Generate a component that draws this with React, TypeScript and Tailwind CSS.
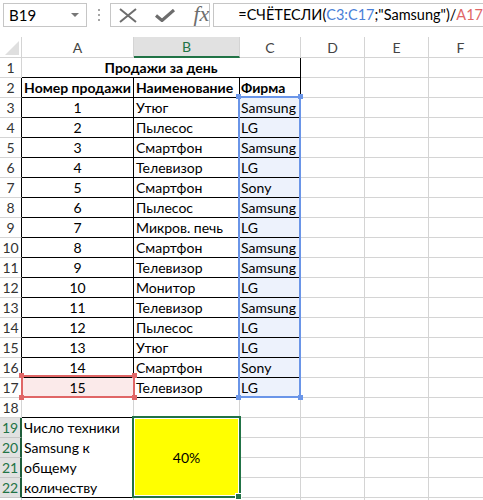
import React from "react";

const rows: [number, string, string][] = [
  [1, "Утюг", "Samsung"],
  [2, "Пылесос", "LG"],
  [3, "Смартфон", "Samsung"],
  [4, "Телевизор", "LG"],
  [5, "Смартфон", "Sony"],
  [6, "Пылесос", "Samsung"],
  [7, "Микров. печь", "LG"],
  [8, "Смартфон", "Samsung"],
  [9, "Телевизор", "Samsung"],
  [10, "Монитор", "LG"],
  [11, "Телевизор", "Samsung"],
  [12, "Пылесос", "LG"],
  [13, "Утюг", "LG"],
  [14, "Смартфон", "Sony"],
  [15, "Телевизор", "LG"],
];

const grid = "border-r border-b border-[#d4d4d4]";
const black = "border-r border-b border-black";

const RowHead = ({ n, dark, sel }: { n?: number; dark?: boolean; sel?: boolean }) => (
  <div
    className={`flex items-center justify-center border-b ${
      sel
        ? "bg-[#e1e1e1] text-[#217346] border-b-[#c6c6c6] border-r-2 border-r-[#1e5e3a]"
        : dark
        ? "text-[#333] border-b-[#d4d4d4] border-r border-r-black"
        : "text-[#333] border-b-[#d4d4d4] border-r border-r-[#d4d4d4]"
    }`}
  >
    {n}
  </div>
);

const Empty = ({ n = 3 }: { n?: number }) => (
  <>
    {Array.from({ length: n }).map((_, i) => (
      <div key={i} className={grid} />
    ))}
  </>
);

const Handle = ({ pos, color }: { pos: string; color: string }) => (
  <div className={`absolute w-[5px] h-[5px] ${pos} ${color}`} />
);

export default function App() {
  return (
    <div
      className="relative w-[483px] h-[500px] overflow-hidden bg-white text-[14px] text-black"
      style={{ fontFamily: "Lato, 'Open Sans', sans-serif" }}
    >
      {/* formula bar */}
      <div className="flex items-start h-[37px] pt-[3px] text-[15px]">
        <div className="ml-[3px] w-[101px] h-[24px] border border-[#c6c6c6] flex items-center justify-between pl-[5px] pr-[7px]">
          <span>B19</span>
          <svg width="8" height="4" viewBox="0 0 8 4">
            <path d="M0 0h8L4 4z" fill="#777" />
          </svg>
        </div>
        <div className="w-[29px] h-[24px] flex flex-col items-center justify-center gap-[3px]">
          <div className="w-[2px] h-[2px] bg-[#a6a6a6]" />
          <div className="w-[2px] h-[2px] bg-[#a6a6a6]" />
          <div className="w-[2px] h-[2px] bg-[#a6a6a6]" />
        </div>
        <div className="w-[110px] h-[24px] border border-[#c6c6c6] flex items-center pl-[8px] gap-[18px]">
          <svg width="18" height="15" viewBox="0 0 18 15">
            <path d="M1 1L17 14M17 1L1 14" stroke="#6d6d6d" strokeWidth="2" fill="none" />
          </svg>
          <svg width="20" height="13" viewBox="0 0 20 13">
            <path d="M1 6.5L7 11.5L19 1" stroke="#6d6d6d" strokeWidth="3.2" fill="none" />
          </svg>
          <span
            className="italic text-[#6d6d6d] text-[22px] leading-none -mt-[2px]"
            style={{ fontFamily: "'Liberation Serif', serif" }}
          >
            fx
          </span>
        </div>
        <div className="ml-[3px] flex-1 h-[24px] border border-[#c6c6c6] border-r-0 flex items-center pl-[24px] whitespace-nowrap text-[14.5px]">
          =СЧЁТЕСЛИ(<span className="text-[#4a7fd8]">C3:C17</span>;"Samsung")/
          <span className="text-[#e06666]">A17</span>
        </div>
      </div>

      {/* sheet */}
      <div className="grid grid-cols-[22px_112px_106px_61px_64px_64px_64px] grid-rows-[21px_repeat(23,20px)] leading-[19px] whitespace-nowrap">
        {/* column headers */}
        <div className="relative border-r border-b border-[#d4d4d4]">
          <svg className="absolute right-[2px] bottom-[2px]" width="14" height="14" viewBox="0 0 14 14">
            <path d="M14 0V14H0z" fill="#dfdfdf" />
          </svg>
        </div>
        <div className={`${grid} flex items-center justify-center text-[#444]`}>A</div>
        <div className="flex items-center justify-center bg-[#e1e1e1] text-[#217346] border-r border-r-[#d4d4d4] border-b-2 border-b-[#217346]">
          B
        </div>
        <div className={`${grid} flex items-center justify-center text-[#444]`}>C</div>
        <div className={`${grid} flex items-center justify-center text-[#444]`}>D</div>
        <div className={`${grid} flex items-center justify-center text-[#444]`}>E</div>
        <div className={`${grid} flex items-center justify-center text-[#444]`}>F</div>

        {/* row 1 */}
        <RowHead n={1} />
        <div className={`col-span-3 ${black} flex items-center justify-center font-bold`}>
          Продажи за день
        </div>
        <Empty />

        {/* row 2 */}
        <RowHead n={2} dark />
        <div className={`${black} flex items-center justify-center font-bold`}>Номер продажи</div>
        <div className={`${black} flex items-center pl-[2px] font-bold`}>Наименование</div>
        <div className={`${black} flex items-center pl-[1px] font-bold`}>Фирма</div>
        <Empty />

        {rows.map(([n, name, firm], i) => (
          <React.Fragment key={n}>
            <RowHead n={i + 3} dark />
            <div
              className={`${black} flex items-center justify-center ${
                n === 15 ? "bg-[#fbeaea]" : ""
              }`}
            >
              {n}
            </div>
            <div className={`${black} flex items-center pl-[2px]`}>{name}</div>
            <div className={`${black} flex items-center pl-[1px] bg-[#edf2fc]`}>{firm}</div>
            <Empty />
          </React.Fragment>
        ))}

        {/* row 18 */}
        <RowHead n={18} />
        <div className="border-r border-r-[#d4d4d4] border-b border-b-black" />
        <Empty n={5} />

        {/* rows 19-22 */}
        <RowHead n={19} sel />
        <div className={`row-span-4 ${black} pl-[2px] leading-[20px]`}>
          Число техники
          <br />
          Samsung к
          <br />
          общему
          <br />
          количеству
        </div>
        <div className="row-span-4 bg-[#ffff00] border-r border-b border-[#d4d4d4] flex items-center justify-center">
          40%
        </div>
        <Empty n={4} />
        <RowHead n={20} sel />
        <Empty n={4} />
        <RowHead n={21} sel />
        <Empty n={4} />
        <RowHead n={22} sel />
        <Empty n={4} />

        <RowHead />
        <Empty n={6} />
      </div>

      {/* C3:C17 reference highlight */}
      <div className="absolute left-[238px] top-[96px] w-[63px] h-[302px] border-2 border-[#6a95e8]">
        <Handle pos="-left-[4px] -top-[4px]" color="bg-[#6a95e8]" />
        <Handle pos="-right-[4px] -top-[4px]" color="bg-[#6a95e8]" />
        <Handle pos="-left-[4px] -bottom-[4px]" color="bg-[#6a95e8]" />
        <Handle pos="-right-[4px] -bottom-[4px]" color="bg-[#6a95e8]" />
      </div>

      {/* A17 reference highlight */}
      <div className="absolute left-[21px] top-[375px] w-[114px] h-[23px] border-2 border-[#e06666]">
        <Handle pos="-left-[4px] -top-[4px]" color="bg-[#e06666]" />
        <Handle pos="-right-[4px] -top-[4px]" color="bg-[#e06666]" />
        <Handle pos="-left-[4px] -bottom-[4px]" color="bg-[#e06666]" />
        <Handle pos="-right-[4px] -bottom-[4px]" color="bg-[#e06666]" />
      </div>

      {/* active cell B19 */}
      <div className="absolute left-[132px] top-[416px] w-[109px] h-[82px] border-2 border-[#217346]">
        <div className="absolute inset-0 border border-white" />
      </div>
      <div className="absolute left-[235px] top-[493px] w-[7px] h-[7px] bg-[#217346] border border-white" />
    </div>
  );
}
